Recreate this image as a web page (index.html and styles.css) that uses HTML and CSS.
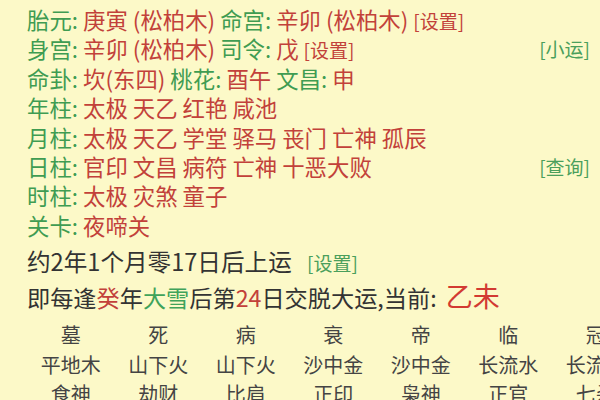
FILE: index.html
```html
<!DOCTYPE html>
<html lang="zh">
<head>
  <meta charset="UTF-8">
  <title>命盘</title>
  <link rel="stylesheet" href="styles.css">
</head>
<body>
  <div class="info">
    <div class="row"><span><span class="lbl">胎元: </span><span class="val">庚寅 (松柏木) </span><span class="lbl">命宫: </span><span class="val">辛卯 (松柏木)</span> <span class="set red">[设置]</span></span></div>
    <div class="row"><span><span class="lbl">身宫: </span><span class="val">辛卯 (松柏木) </span><span class="lbl">司令: </span><span class="val">戊</span> <span class="set red">[设置]</span></span><span class="set green">[小运]</span></div>
    <div class="row"><span><span class="lbl">命卦: </span><span class="val">坎(东四) </span><span class="lbl">桃花: </span><span class="val">酉午 </span><span class="lbl">文昌: </span><span class="val">申</span></span></div>
    <div class="row"><span><span class="lbl">年柱: </span><span class="val">太极 天乙 红艳 咸池</span></span></div>
    <div class="row"><span><span class="lbl">月柱: </span><span class="val">太极 天乙 学堂 驿马 丧门 亡神 孤辰</span></span></div>
    <div class="row"><span><span class="lbl">日柱: </span><span class="val">官印 文昌 病符 亡神 十恶大败</span></span><span class="set green">[查询]</span></div>
    <div class="row"><span><span class="lbl">时柱: </span><span class="val">太极 灾煞 童子</span></span></div>
    <div class="row"><span><span class="lbl">关卡: </span><span class="val">夜啼关</span></span></div>
  </div>

  <div class="luck">
    <div class="start">约2年1个月零17日后上运 <span class="set green">[设置]</span></div>
    <div class="cycle">即每逢<span class="val">癸</span>年<span class="lbl">大雪</span>后第<span class="val">24</span>日交脱大运,当前: <span class="now">乙未</span></div>
  </div>

  <div class="table">
    <span>墓</span><span>死</span><span>病</span><span>衰</span><span>帝</span><span>临</span><span>冠</span>
    <span>平地木</span><span>山下火</span><span>山下火</span><span>沙中金</span><span>沙中金</span><span>长流水</span><span>长流水</span>
    <span>食神</span><span>劫财</span><span>比肩</span><span>正印</span><span>枭神</span><span>正官</span><span>七杀</span>
  </div>
</body>
</html>
```

FILE: styles.css
```css
body {
  margin: 0;
  padding: 5px 0 0 27px;
  height: 400px;
  overflow: hidden;
  box-sizing: border-box;
  background-color: #fcf9c8;
  font-family: "Noto Sans CJK SC", "Noto Sans", sans-serif;
  color: #333;
}

.info {
  font-size: 22.4px;
}

.row {
  display: flex;
  justify-content: space-between;
  align-items: center;
  height: 29.4px;
  line-height: 29.4px;
  padding-right: 10px;
  white-space: nowrap;
}

.lbl {
  color: #3f9c52;
}

.val {
  color: #c2413a;
}

.set {
  font-size: 19px;
}

.set.red {
  color: #c2413a;
}

.set.green {
  color: #4a9f5c;
}

.luck {
  margin-top: 6px;
}

.start {
  height: 32px;
  font-size: 23.6px;
  line-height: 30px;
  white-space: nowrap;
}

.start .set {
  margin-left: 10px;
}

.cycle {
  height: 36px;
  font-size: 23.2px;
  line-height: 36px;
  white-space: nowrap;
}

.cycle .lbl {
  color: #3fa35a;
}

.now {
  margin-left: 4px;
  font-size: 27px;
  color: #d23a32;
}

.table {
  display: grid;
  grid-template-columns: repeat(7, 87.5px);
  margin-top: 6px;
  font-size: 20px;
  line-height: 29.5px;
  color: #444;
  text-align: center;
  white-space: nowrap;
}
```
